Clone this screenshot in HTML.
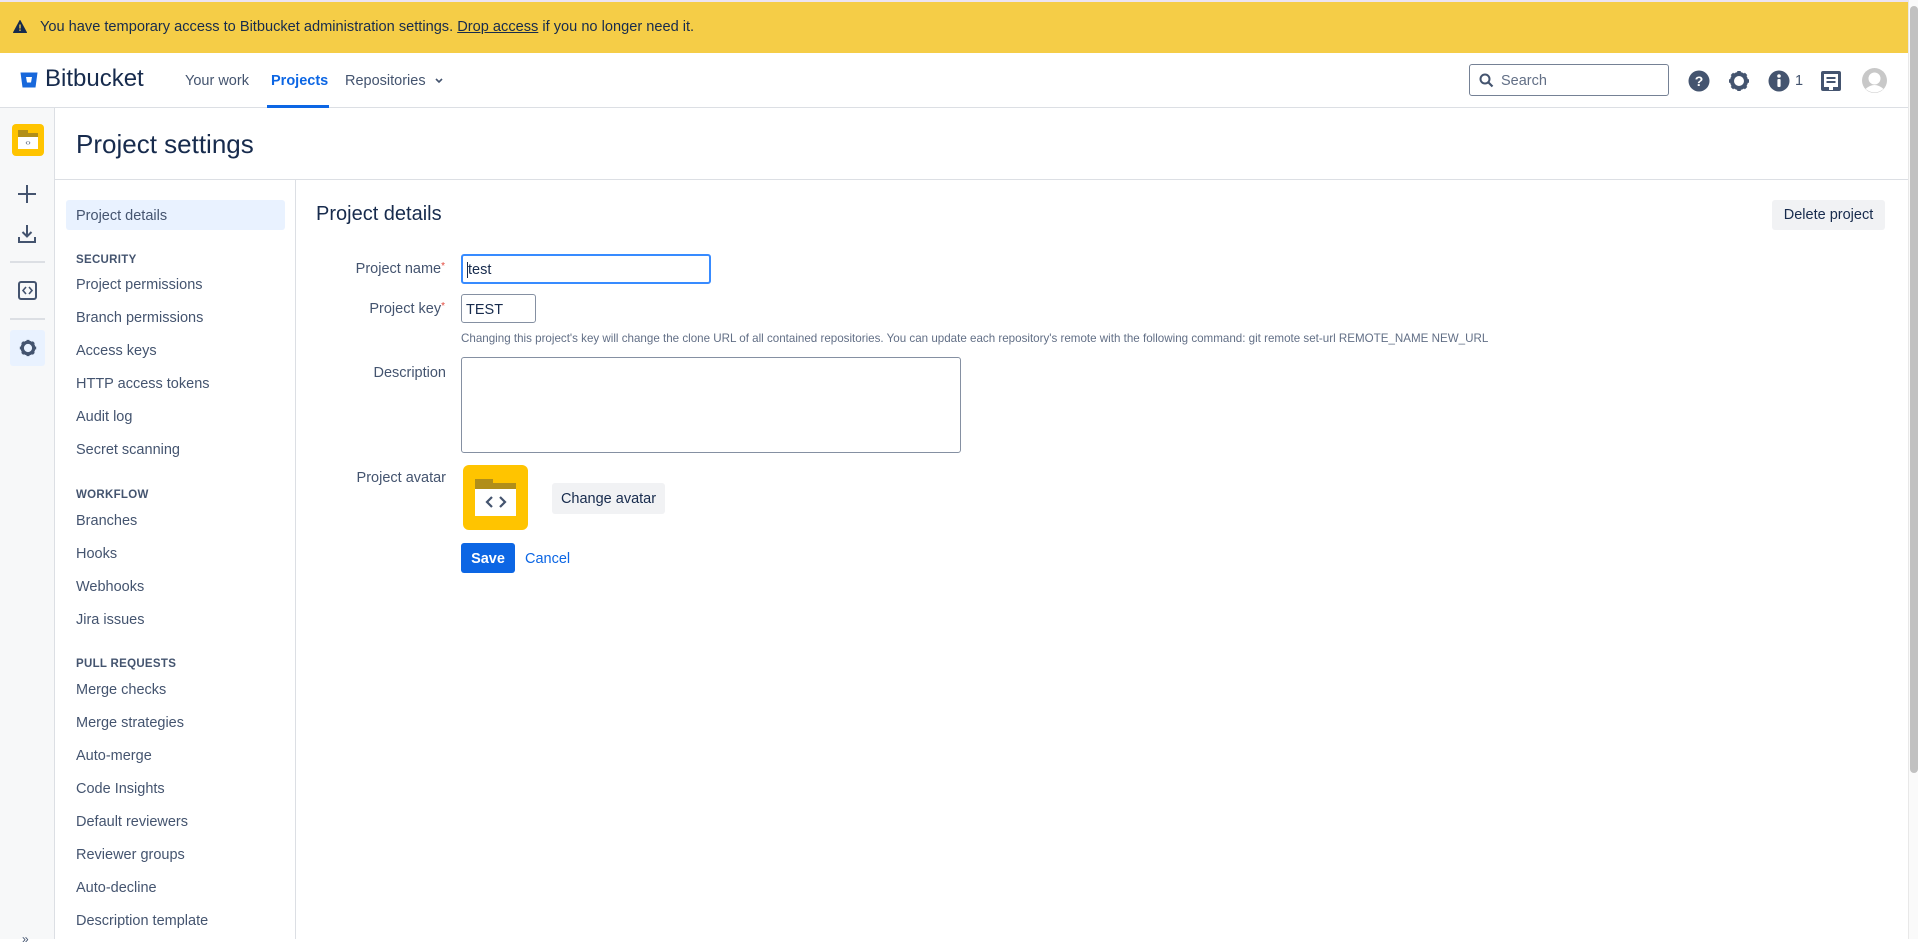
<!DOCTYPE html>
<html><head><meta charset="utf-8"><style>
*{box-sizing:border-box;margin:0;padding:0}
html,body{width:1918px;height:939px;overflow:hidden;background:#fff;font-family:"Liberation Sans",sans-serif;color:#172b4d;font-size:14px}
.abs{position:absolute}
.banner{left:0;top:0;width:1908px;height:53px;background:#f5cd47;border-top:2px solid #ece4f2}
.banner .t{left:40px;top:17px;font-size:14.6px;color:#172b4d;white-space:nowrap}
.hdr{left:0;top:53px;width:1908px;height:55px;border-bottom:1px solid #dcdfe4;background:#fff}
.nav{font-size:14.5px;color:#44546f;top:20px;white-space:nowrap}
.side{left:0;top:108px;width:55px;height:831px;background:#f7f8f9;border-right:1px solid #dcdfe4}
.snav{left:55px;top:180px;width:241px;height:759px;border-right:1px solid #dcdfe4}
.it{position:absolute;left:21px;font-size:14.5px;color:#44546f;white-space:nowrap;line-height:18px}
.sec{position:absolute;left:21px;font-size:11.5px;font-weight:bold;color:#44546f;letter-spacing:.3px}
.lbl{position:absolute;font-size:14.5px;color:#44546f;text-align:right;right:1473px;white-space:nowrap}
.star{color:#e2483d;font-size:10px;vertical-align:top}
</style></head><body>
<div class="abs banner">
<svg class="abs" style="left:13px;top:18px" width="14" height="13" viewBox="0 0 14 13"><path d="M7 0.5 L13.5 12.5 H0.5 Z" fill="#172b4d" stroke="#172b4d" stroke-linejoin="round"/><rect x="6.3" y="4.5" width="1.4" height="4" fill="#f5cd47"/><rect x="6.3" y="9.5" width="1.4" height="1.4" fill="#f5cd47"/></svg>
<div class="abs t">You have temporary access to Bitbucket administration settings. <span style="text-decoration:underline">Drop access</span> if you no longer need it.</div>
</div>
<div class="abs hdr">
<svg class="abs" style="left:20px;top:19px" width="18" height="16" viewBox="0 0 18 16"><path d="M0.5 0.5 H17.5 L15.5 15.5 H2.5 Z" fill="#1868db"/><path d="M6 5 H12 L11 10.5 H7 Z" fill="#fff"/></svg>
<div class="abs" style="left:45px;top:12px;font-size:24px;color:#172b4d">Bitbucket</div>
<div class="abs nav" style="left:185px">Your work</div>
<div class="abs nav" style="left:271px;color:#0c66e4;font-weight:bold">Projects</div>
<div class="abs" style="left:267px;top:52px;width:62px;height:3px;background:#0c66e4"></div>
<div class="abs nav" style="left:345px">Repositories <svg width="10" height="8" style="margin-left:4px" viewBox="0 0 10 8"><path d="M2 2 L5 5 L8 2" stroke="#44546f" stroke-width="1.6" fill="none"/></svg></div>
<div class="abs" style="left:1469px;top:11px;width:200px;height:32px;border:1px solid #758195;border-radius:3px">
<svg class="abs" style="left:9px;top:8px" width="15" height="15" viewBox="0 0 15 15"><circle cx="6" cy="6" r="4.5" stroke="#44546f" stroke-width="2" fill="none"/><path d="M9.5 9.5 L13.5 13.5" stroke="#44546f" stroke-width="2.2"/></svg>
<div class="abs" style="left:31px;top:8px;font-size:14.5px;color:#626f86">Search</div></div>
<svg class="abs" style="left:1688px;top:17px" width="22" height="22" viewBox="0 0 22 22"><circle cx="11" cy="11" r="10.5" fill="#44546f"/><text x="11" y="16" text-anchor="middle" font-family="Liberation Sans" font-weight="bold" font-size="14" fill="#fff">?</text></svg>
<svg class="abs" style="left:1728px;top:17px" width="22" height="22" viewBox="0 0 22 22"><circle cx="11" cy="11" r="7" fill="none" stroke="#44546f" stroke-width="4"/><g stroke="#44546f" stroke-width="3.5"><path d="M11 1v4M11 17v4M1 11h4M17 11h4M3.9 3.9l2.8 2.8M15.3 15.3l2.8 2.8M3.9 18.1l2.8-2.8M15.3 6.7l2.8-2.8"/></g></svg>
<svg class="abs" style="left:1768px;top:17px" width="22" height="22" viewBox="0 0 22 22"><circle cx="11" cy="11" r="10.5" fill="#44546f"/><circle cx="11" cy="6" r="1.8" fill="#fff"/><rect x="9.4" y="9" width="3.2" height="8" rx="1" fill="#fff"/></svg>
<div class="abs" style="left:1795px;top:20px;font-size:14.5px;color:#44546f">1</div>
<svg class="abs" style="left:1820px;top:17px" width="22" height="22" viewBox="0 0 22 22"><rect x="1" y="1" width="20" height="20" rx="2" fill="#44546f"/><rect x="4" y="4" width="14" height="13" fill="#fff"/><rect x="6.5" y="7" width="9" height="2" fill="#44546f"/><rect x="6.5" y="11" width="9" height="2" fill="#44546f"/><rect x="9" y="17" width="4" height="3" fill="#fff"/></svg>
<svg class="abs" style="left:1862px;top:15px" width="25" height="25" viewBox="0 0 25 25"><circle cx="12.5" cy="12.5" r="12.5" fill="#c8c8c8"/><circle cx="12.5" cy="10.5" r="6" fill="#fff"/><path d="M3.5 21 Q12.5 13 21.5 21 Q12.5 28 3.5 21Z" fill="#fff"/></svg>
</div>
<div class="abs side">
<div class="abs" style="left:12px;top:16px;width:32px;height:32px;background:#ffc400;border-radius:4px"><div class="abs" style="left:6px;top:6px;width:10px;height:4px;background:#b18e19"></div><div class="abs" style="left:6px;top:9px;width:20px;height:4px;background:#b18e19"></div><div class="abs" style="left:6px;top:13px;width:20px;height:12px;background:#fff;font-size:8px;color:#44546f;text-align:center;line-height:12px">‹›</div></div>
<svg class="abs" style="left:17px;top:76px" width="20" height="20" viewBox="0 0 20 20"><path d="M10 1v18M1 10h18" stroke="#44546f" stroke-width="2"/></svg>
<svg class="abs" style="left:17px;top:116px" width="20" height="20" viewBox="0 0 20 20"><path d="M10 1v11M5.5 8l4.5 4.5 4.5-4.5M2 13v5h16v-5" stroke="#44546f" stroke-width="2" fill="none"/></svg>
<div class="abs" style="left:10px;top:153px;width:35px;height:2px;background:#dcdfe4"></div>
<svg class="abs" style="left:18px;top:173px" width="19" height="19" viewBox="0 0 19 19"><rect x="1" y="1" width="17" height="17" rx="2" fill="none" stroke="#44546f" stroke-width="2"/><path d="M8 6l-3 3.5 3 3.5M11 6l3 3.5-3 3.5" stroke="#44546f" stroke-width="1.6" fill="none"/></svg>
<div class="abs" style="left:10px;top:210px;width:35px;height:2px;background:#dcdfe4"></div>
<div class="abs" style="left:10px;top:222px;width:35px;height:36px;background:#e9f2ff;border-radius:3px"></div>
<svg class="abs" style="left:19px;top:231px" width="18" height="18" viewBox="0 0 22 22"><circle cx="11" cy="11" r="7" fill="none" stroke="#44546f" stroke-width="4"/><g stroke="#44546f" stroke-width="3.5"><path d="M11 1v4M11 17v4M1 11h4M17 11h4M3.9 3.9l2.8 2.8M15.3 15.3l2.8 2.8M3.9 18.1l2.8-2.8M15.3 6.7l2.8-2.8"/></g></svg>
<div class="abs" style="left:22px;top:824px;font-size:12px;color:#44546f">»</div>
</div>
<div class="abs" style="left:76px;top:129px;font-size:26px;color:#172b4d">Project settings</div>
<div class="abs" style="left:55px;top:179px;width:1853px;height:1px;background:#dcdfe4"></div>
<div class="abs snav">
<div class="abs" style="left:11px;top:20px;width:219px;height:30px;background:#e9f2ff;border-radius:3px"></div>
<div class="it" style="top:27px">Project details</div>
<div class="sec" style="top:74px">SECURITY</div>
<div class="it" style="top:96px">Project permissions</div>
<div class="it" style="top:129px">Branch permissions</div>
<div class="it" style="top:162px">Access keys</div>
<div class="it" style="top:195px">HTTP access tokens</div>
<div class="it" style="top:228px">Audit log</div>
<div class="it" style="top:261px">Secret scanning</div>
<div class="sec" style="top:309px">WORKFLOW</div>
<div class="it" style="top:332px">Branches</div>
<div class="it" style="top:365px">Hooks</div>
<div class="it" style="top:398px">Webhooks</div>
<div class="it" style="top:431px">Jira issues</div>
<div class="sec" style="top:478px">PULL REQUESTS</div>
<div class="it" style="top:501px">Merge checks</div>
<div class="it" style="top:534px">Merge strategies</div>
<div class="it" style="top:567px">Auto-merge</div>
<div class="it" style="top:600px">Code Insights</div>
<div class="it" style="top:633px">Default reviewers</div>
<div class="it" style="top:666px">Reviewer groups</div>
<div class="it" style="top:699px">Auto-decline</div>
<div class="it" style="top:732px">Description template</div>
</div>
<div class="abs" style="left:316px;top:203px;font-size:20px;font-weight:500;color:#172b4d">Project details</div>
<div class="abs" style="left:1772px;top:200px;width:113px;height:30px;background:#f1f2f4;border-radius:3px;font-size:14.5px;text-align:center;line-height:31px;color:#172b4d">Delete project</div>
<div class="lbl" style="top:261px">Project name<span class="star">*</span></div>
<div class="abs" style="left:461px;top:254px;width:250px;height:30px;border:2px solid #388bff;border-radius:3px"><div class="abs" style="left:4px;top:6px;font-size:14.5px;color:#172b4d"><span style="border-left:1px solid #172b4d"></span>test</div></div>
<div class="lbl" style="top:301px">Project key<span class="star">*</span></div>
<div class="abs" style="left:461px;top:294px;width:75px;height:29px;border:1px solid #8590a2;border-radius:3px"><div class="abs" style="left:4px;top:7px;font-size:14.5px;color:#172b4d">TEST</div></div>
<div class="abs" style="left:461px;top:332px;font-size:11.6px;color:#626f86;white-space:nowrap">Changing this project's key will change the clone URL of all contained repositories. You can update each repository's remote with the following command: git remote set-url REMOTE_NAME NEW_URL</div>
<div class="lbl" style="top:365px;right:1472px">Description</div>
<div class="abs" style="left:461px;top:357px;width:500px;height:96px;border:1px solid #8590a2;border-radius:3px"></div>
<div class="lbl" style="top:470px;right:1472px">Project avatar</div>
<div class="abs" style="left:463px;top:465px;width:65px;height:65px;background:#ffc400;border-radius:6px"><div class="abs" style="left:12px;top:14px;width:18px;height:6px;background:#b18e19"></div><div class="abs" style="left:12px;top:18px;width:41px;height:6px;background:#b18e19"></div><div class="abs" style="left:12px;top:24px;width:41px;height:27px;background:#fff"></div><svg class="abs" style="left:22px;top:30px" width="22" height="14" viewBox="0 0 22 14"><path d="M7 2L2 7l5 5M15 2l5 5-5 5" stroke="#44546f" stroke-width="2.2" fill="none"/></svg></div>
<div class="abs" style="left:552px;top:483px;width:113px;height:31px;background:#f1f2f4;border-radius:3px;font-size:14.5px;text-align:center;line-height:33px;color:#172b4d">Change avatar</div>
<div class="abs" style="left:461px;top:543px;width:54px;height:30px;background:#0c66e4;border-radius:3px;font-size:14.5px;font-weight:bold;text-align:center;line-height:32px;color:#fff">Save</div>
<div class="abs" style="left:525px;top:551px;font-size:14.5px;color:#0c66e4">Cancel</div>
<div class="abs" style="left:1908px;top:0;width:10px;height:939px;background:#fafafa;border-left:1px solid #e8e8e8"><div class="abs" style="left:1px;top:6px;width:8px;height:767px;background:#c1c1c1;border-radius:4px"></div></div>
</body></html>
